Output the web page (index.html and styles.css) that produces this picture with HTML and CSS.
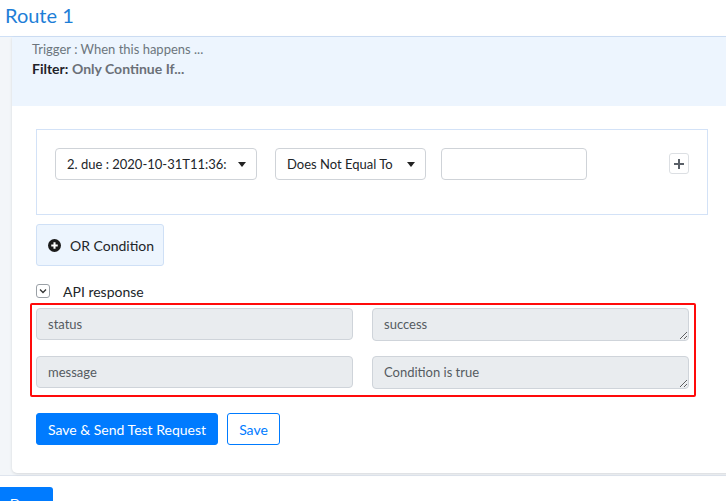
FILE: index.html
```html
<!DOCTYPE html>
<html>
<head>
<meta charset="utf-8">
<link rel="stylesheet" href="styles.css">
</head>
<body>
<div class="page">
  <h1 class="route-title">Route 1</h1>
  <div class="route-area">
    <div class="card">
      <div class="card-head">
        <div class="trigger">Trigger : When this happens ...</div>
        <div class="filter"><b>Filter:</b> <span>Only Continue If...</span></div>
      </div>
      <div class="card-body">
        <div class="cond-box">
          <div class="select sel-field"><span class="sel-text">2. due : 2020-10-31T11:36:</span><i class="caret"></i></div>
          <div class="select sel-op"><span class="sel-text">Does Not Equal To</span><i class="caret"></i></div>
          <div class="text-input"></div>
          <div class="spacer"></div>
          <button class="plus-btn">
            <svg width="12" height="12" viewBox="0 0 12 12"><path d="M6 1v10M1 6h10" stroke="#5a6068" stroke-width="2"/></svg>
          </button>
        </div>
        <button class="or-btn">
          <svg class="or-icon" width="13" height="13" viewBox="0 0 14 14"><circle cx="7" cy="7" r="7" fill="#1b1b1b"/><path d="M7 3.5v7M3.5 7h7" stroke="#fff" stroke-width="2.2"/></svg>
          OR Condition
        </button>
        <div class="api-row">
          <span class="chev-box"><svg width="8" height="6" viewBox="0 0 8 6"><path d="M1 1.5l3 3 3-3" fill="none" stroke="#333" stroke-width="1.3"/></svg></span>
          <span class="api-label">API response</span>
        </div>
        <div class="api-box">
          <div class="kv">
            <input class="field" value="status" readonly>
            <textarea class="field area" readonly>success</textarea>
          </div>
          <div class="kv">
            <input class="field" value="message" readonly>
            <textarea class="field area" readonly>Condition is true</textarea>
          </div>
        </div>
        <div class="actions">
          <button class="btn-primary">Save &amp; Send Test Request</button>
          <button class="btn-outline">Save</button>
        </div>
      </div>
    </div>
  </div>
  <div class="footer">
    <button class="done-btn">Done</button>
  </div>
</div>
</body>
</html>
```

FILE: styles.css
```css
html, body {
  margin: 0;
  padding: 0;
  background: #fff;
  overflow: hidden;
}
body {
  font-family: Lato, "Open Sans", Arial, sans-serif;
  color: #212529;
}
.page {
  width: 760px;
}
.route-title {
  margin: 0;
  height: 37px;
  box-sizing: border-box;
  padding: 2px 0 0 5px;
  font-size: 20px;
  font-weight: 400;
  color: #1d7ed7;
  line-height: 26px;
  border-bottom: 1px solid #cfe0f6;
}
.route-area {
  background: #f3f6f9;
  padding: 0 0 2px 12px;
  border-bottom: 1px solid #dfe5ee;
}
.card {
  background: #fff;
  border-radius: 0 0 0 5px;
  box-shadow: 0 1px 3px rgba(0,0,0,0.12);
}
.card-head {
  background: #edf5fe;
  height: 69px;
  box-sizing: border-box;
  padding: 4px 20px 0;
}
.trigger {
  font-size: 13px;
  color: #6c757d;
  line-height: 16px;
}
.filter {
  font-size: 14px;
  line-height: 18px;
  margin-top: 3px;
}
.filter b {
  color: #1f2329;
  font-weight: 700;
}
.filter span {
  color: #6b7078;
  font-weight: 700;
}
.card-body {
  padding: 23px 0 28px 24px;
}
.cond-box {
  width: 672px;
  height: 86px;
  box-sizing: border-box;
  border: 1px solid #d3e2f7;
  padding: 18px 18px 0 18px;
  display: flex;
  align-items: flex-start;
}
.select {
  height: 32px;
  box-sizing: border-box;
  border: 1px solid #cfd3d8;
  border-radius: 4px;
  display: flex;
  align-items: center;
  padding: 0 10px 0 11px;
  font-size: 13px;
  color: #212529;
}
.sel-text {
  flex: 1;
  white-space: nowrap;
  overflow: hidden;
}
.sel-field { width: 202px; }
.sel-op { width: 151px; margin-left: 18px; }
.caret {
  width: 0;
  height: 0;
  border-left: 4px solid transparent;
  border-right: 4px solid transparent;
  border-top: 5px solid #222;
  margin-left: 8px;
}
.text-input {
  width: 146px;
  height: 32px;
  box-sizing: border-box;
  border: 1px solid #cfd3d8;
  border-radius: 4px;
  margin-left: 15px;
}
.spacer { flex: 1; }
.plus-btn {
  width: 20px;
  height: 21px;
  margin-top: 5px;
  padding: 0;
  border: 1px solid #dcdfe3;
  border-radius: 3px;
  background: #fff;
  display: flex;
  align-items: center;
  justify-content: center;
}
.or-btn {
  margin-top: 9px;
  width: 128px;
  height: 42px;
  box-sizing: border-box;
  background: #edf5fe;
  border: 1px solid #cfe0f6;
  border-radius: 3px;
  font-family: inherit;
  font-size: 14px;
  color: #212529;
  display: flex;
  align-items: center;
  padding: 0 0 0 11px;
}
.or-icon { margin-right: 9px; }
.api-row {
  margin-top: 18px;
  display: flex;
  align-items: center;
  height: 14px;
}
.chev-box {
  width: 14px;
  height: 14px;
  box-sizing: border-box;
  border: 1px solid #9aa0a6;
  border-radius: 3px;
  display: flex;
  align-items: center;
  justify-content: center;
}
.api-label {
  margin-left: 13px;
  font-size: 14px;
  color: #212529;
}
.api-box {
  margin: 5px 0 0 -6px;
  width: 666px;
  box-sizing: border-box;
  border: 2px solid #ff0a0a;
  border-radius: 2px;
  padding: 3px 5px 6px 4px;
  display: flex;
  flex-direction: column;
  gap: 15px;
}
.kv {
  display: flex;
  gap: 19px;
}
.field {
  width: 317px;
  height: 32px;
  box-sizing: border-box;
  background: #e9ecef;
  border: 1px solid #cfd4da;
  border-radius: 4px;
  font-family: inherit;
  font-size: 13px;
  color: #555b61;
  padding: 0 11px;
  margin: 0;
  outline: none;
}
.area {
  height: 33px;
  padding: 7px 11px 0;
  line-height: 17px;
  resize: vertical;
  overflow: hidden;
}
.actions {
  margin-top: 16px;
  display: flex;
  gap: 9px;
}
.btn-primary {
  height: 32px;
  width: 182px;
  background: #007bff;
  color: #fff;
  border: 1px solid #007bff;
  border-radius: 3px;
  font-family: inherit;
  font-size: 14px;
  padding: 0;
}
.btn-outline {
  height: 32px;
  width: 53px;
  background: #fff;
  color: #007bff;
  border: 1px solid #007bff;
  border-radius: 3px;
  font-family: inherit;
  font-size: 14px;
  padding: 0;
}
.footer {
  padding-top: 11px;
}
.done-btn {
  height: 32px;
  width: 61px;
  margin-left: -8px;
  background: #007bff;
  color: #fff;
  border: none;
  border-radius: 3px;
  font-family: inherit;
  font-size: 14px;
  padding: 0 0 0 8px;
}
```
